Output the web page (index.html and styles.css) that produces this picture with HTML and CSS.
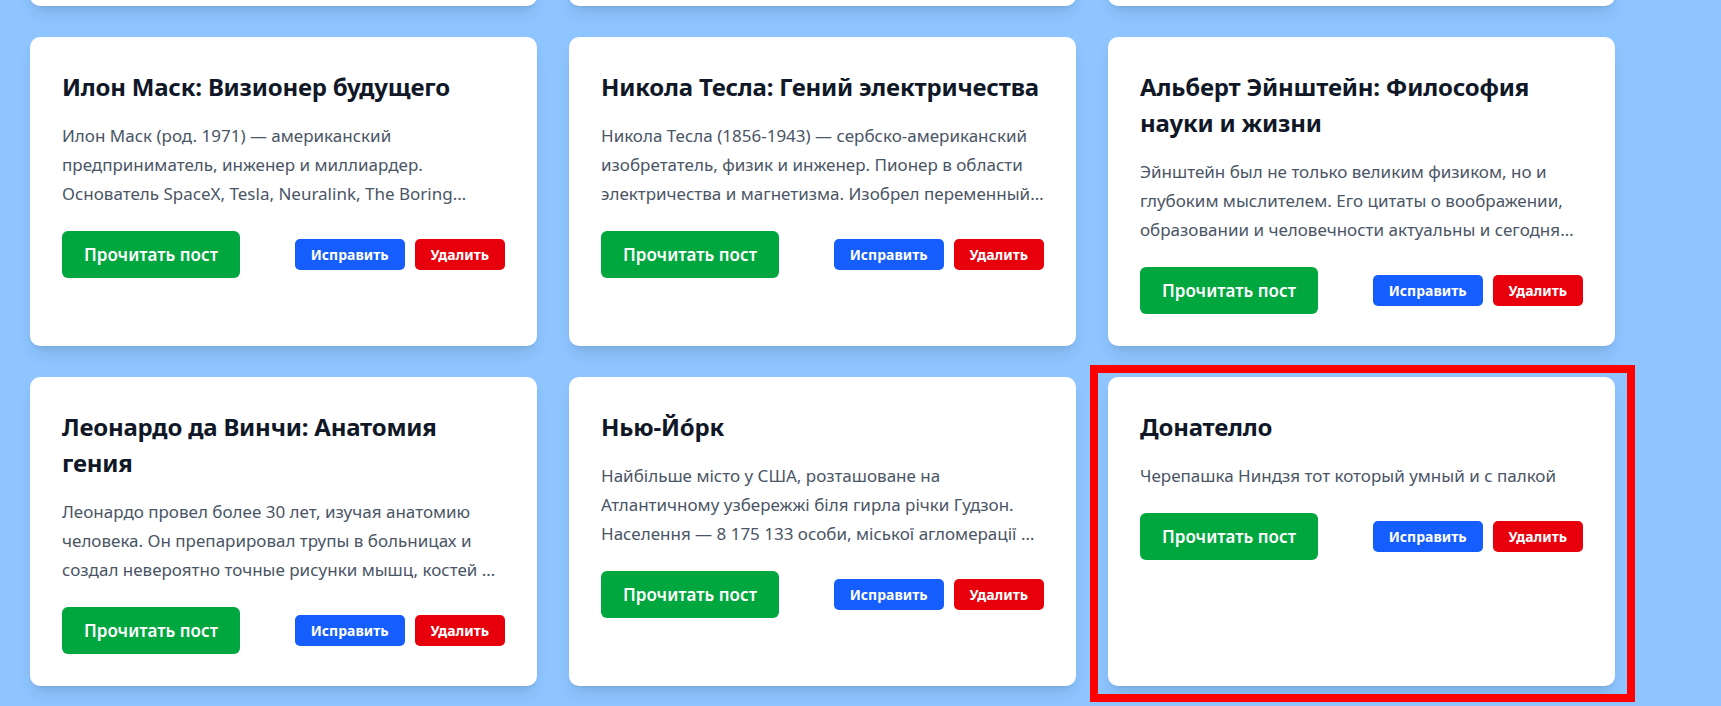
FILE: index.html
```html
<!DOCTYPE html>
<html lang="ru">
<head>
<meta charset="utf-8">
<title>Посты</title>
<link rel="stylesheet" href="styles.css">
</head>
<body>
<main class="posts">
  <article class="card">
    <h2 class="card-title">Марк Аврелий: Размышления императора</h2>
    <p class="card-text">Марк Аврелий — римский император и философ-стоик. Его записи «Наедине с собой» до сих пор читают как практическое руководство к жизни и спокойствию духа.</p>
    <div class="card-actions">
      <button class="btn btn-read">Прочитать пост</button>
      <div class="btn-group"><button class="btn btn-sm btn-edit">Исправить</button><button class="btn btn-sm btn-delete">Удалить</button></div>
    </div>
  </article>
  <article class="card">
    <h2 class="card-title">Мария Кюри: Первая женщина нобелиат</h2>
    <p class="card-text">Мария Склодовская-Кюри — физик и химик, дважды лауреат Нобелевской премии. Открыла полоний и радий, заложила основы учения о радиоактивности.</p>
    <div class="card-actions">
      <button class="btn btn-read">Прочитать пост</button>
      <div class="btn-group"><button class="btn btn-sm btn-edit">Исправить</button><button class="btn btn-sm btn-delete">Удалить</button></div>
    </div>
  </article>
  <article class="card">
    <h2 class="card-title">Стив Джобс: Думай иначе и меняй мир</h2>
    <p class="card-text">Стив Джобс — сооснователь Apple, создатель Macintosh, iPod, iPhone и iPad. Его подход к дизайну и продуктам изменил целые отрасли и привычки людей.</p>
    <div class="card-actions">
      <button class="btn btn-read">Прочитать пост</button>
      <div class="btn-group"><button class="btn btn-sm btn-edit">Исправить</button><button class="btn btn-sm btn-delete">Удалить</button></div>
    </div>
  </article>

  <article class="card">
    <h2 class="card-title">Илон Маск: Визионер будущего</h2>
    <p class="card-text">Илон Маск (род. 1971) — американский предприниматель, инженер и миллиардер. Основатель SpaceX, Tesla, Neuralink, The Boring Company и других компаний, меняющих будущее.</p>
    <div class="card-actions">
      <button class="btn btn-read">Прочитать пост</button>
      <div class="btn-group"><button class="btn btn-sm btn-edit">Исправить</button><button class="btn btn-sm btn-delete">Удалить</button></div>
    </div>
  </article>
  <article class="card">
    <h2 class="card-title">Никола Тесла: Гений электричества</h2>
    <p class="card-text">Никола Тесла (1856-1943) — сербско-американский изобретатель, физик и инженер. Пионер в области электричества и магнетизма. Изобрел переменный ток, асинхронный двигатель и многое другое.</p>
    <div class="card-actions">
      <button class="btn btn-read">Прочитать пост</button>
      <div class="btn-group"><button class="btn btn-sm btn-edit">Исправить</button><button class="btn btn-sm btn-delete">Удалить</button></div>
    </div>
  </article>
  <article class="card">
    <h2 class="card-title">Альберт Эйнштейн: Философия науки и жизни</h2>
    <p class="card-text">Эйнштейн был не только великим физиком, но и глубоким мыслителем. Его цитаты о воображении, образовании и человечности актуальны и сегодня для многих поколений учёных и мыслителей.</p>
    <div class="card-actions">
      <button class="btn btn-read">Прочитать пост</button>
      <div class="btn-group"><button class="btn btn-sm btn-edit">Исправить</button><button class="btn btn-sm btn-delete">Удалить</button></div>
    </div>
  </article>

  <article class="card">
    <h2 class="card-title">Леонардо да Винчи: Анатомия гения</h2>
    <p class="card-text">Леонардо провел более 30 лет, изучая анатомию человека. Он препарировал трупы в больницах и создал невероятно точные рисунки мышц, костей и внутренних органов.</p>
    <div class="card-actions">
      <button class="btn btn-read">Прочитать пост</button>
      <div class="btn-group"><button class="btn btn-sm btn-edit">Исправить</button><button class="btn btn-sm btn-delete">Удалить</button></div>
    </div>
  </article>
  <article class="card">
    <h2 class="card-title">Нью-Йо́рк</h2>
    <p class="card-text">Найбільше місто у США, розташоване на Атлантичному узбережжі біля гирла річки Гудзон. Населення — 8 175 133 особи, міської агломерації — 18,9 млн.</p>
    <div class="card-actions">
      <button class="btn btn-read">Прочитать пост</button>
      <div class="btn-group"><button class="btn btn-sm btn-edit">Исправить</button><button class="btn btn-sm btn-delete">Удалить</button></div>
    </div>
  </article>
  <article class="card card-highlight">
    <h2 class="card-title">Донателло</h2>
    <p class="card-text">Черепашка Ниндзя тот который умный и с палкой</p>
    <div class="card-actions">
      <button class="btn btn-read">Прочитать пост</button>
      <div class="btn-group"><button class="btn btn-sm btn-edit">Исправить</button><button class="btn btn-sm btn-delete">Удалить</button></div>
    </div>
    <div class="highlight-frame"></div>
  </article>
</main>
</body>
</html>
```

FILE: styles.css
```css
* {
  box-sizing: border-box;
}

html,
body {
  margin: 0;
}

body {
  min-height: 706px;
  background: #8ec5ff;
  font-family: "Noto Sans", "Open Sans", sans-serif;
  overflow: hidden;
}

.posts {
  display: grid;
  grid-template-columns: repeat(3, 507px);
  gap: 31px 32px;
  padding-left: 30px;
  margin-top: -303px;
}

.card {
  position: relative;
  background: #ffffff;
  border-radius: 10px;
  padding: 32px;
  box-shadow: 0 10px 15px -3px rgba(0, 0, 0, 0.1), 0 4px 6px -4px rgba(0, 0, 0, 0.1);
}

.card-title {
  margin: 0 0 16px;
  font-size: 24px;
  line-height: 36px;
  font-weight: 700;
  letter-spacing: -0.2px;
  color: #101828;
}

.card-text {
  margin: 0 0 23px;
  font-size: 17px;
  line-height: 29px;
  color: #4a5565;
  display: -webkit-box;
  -webkit-line-clamp: 3;
  -webkit-box-orient: vertical;
  overflow: hidden;
}

.card-actions {
  display: flex;
  justify-content: space-between;
  align-items: center;
}

.btn-group {
  display: flex;
  gap: 10px;
}

.btn {
  border: none;
  color: #ffffff;
  font-family: inherit;
  font-weight: 600;
  cursor: pointer;
}

.btn-read {
  background: #00a63e;
  font-size: 17px;
  line-height: 27px;
  padding: 10px 22px;
  border-radius: 6px;
}

.btn-sm {
  font-size: 14px;
  font-weight: 700;
  line-height: 21px;
  padding: 5px 16px;
  border-radius: 5px;
}

.btn-edit {
  background: #155dfc;
}

.btn-delete {
  background: #e7000b;
}

.highlight-frame {
  position: absolute;
  top: -12px;
  left: -18px;
  width: 545px;
  height: 337px;
  border: 8px solid #ff0000;
  pointer-events: none;
}
```
